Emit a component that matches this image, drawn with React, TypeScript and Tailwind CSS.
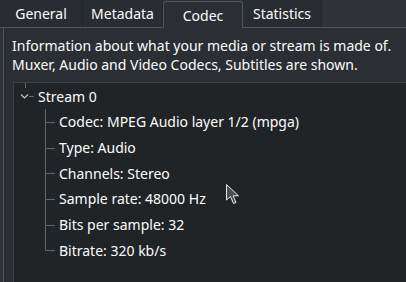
import React from 'react';

const tabs = [
  { label: 'General', w: 'w-[83px]' },
  { label: 'Metadata', w: 'w-[80px]' },
  { label: 'Codec', w: 'w-[80px]', active: true },
  { label: 'Statistics', w: 'w-[79px]' },
];

const fields = [
  'Codec: MPEG Audio layer 1/2 (mpga)',
  'Type: Audio',
  'Channels: Stereo',
  'Sample rate: 48000 Hz',
  'Bits per sample: 32',
  'Bitrate: 320 kb/s',
];

const Branch = ({ last }: { last: boolean }) => (
  <svg width="14" height="26" className="shrink-0">
    <line x1="0.5" y1="0" x2="0.5" y2={last ? 13 : 26} stroke="#62666b" />
    <line x1="0.5" y1="13.5" x2="10" y2="13.5" stroke="#62666b" />
  </svg>
);

const App: React.FC = () => {
  return (
    <div
      className="relative w-[406px] h-[282px] overflow-hidden bg-[#2e3236] text-[#fcfcfc] text-[14px] flex flex-col"
      style={{ fontFamily: '"Noto Sans", "DejaVu Sans", sans-serif' }}
    >
      {/* tab bar */}
      <div className="flex h-[28px] shrink-0">
        {tabs.map((t) =>
          t.active ? (
            <div
              key={t.label}
              className={`${t.w} mt-[1px] h-[27px] flex items-center justify-center border border-b-0 border-[#505459] rounded-t-[3px] bg-[#2b2f33]`}
            >
              {t.label}
            </div>
          ) : (
            <div
              key={t.label}
              className={`${t.w} h-[28px] flex items-center justify-center bg-[#292c30] border-b border-[#505459] border-r border-r-[#24272a]`}
            >
              {t.label}
            </div>
          )
        )}
        <div className="flex-1 h-[28px] border-b border-[#505459] bg-[#2f3337]" />
      </div>

      {/* panel */}
      <div className="flex-1 ml-[3px] border-l border-[#505459] bg-[#2b2f33] flex flex-col">
        <div className="px-[8px] pt-[8px] leading-[19px]">
          <p>Information about what your media or stream is made of.</p>
          <p>Muxer, Audio and Video Codecs, Subtitles are shown.</p>
        </div>

        <div className="flex-1 mt-[8px] ml-[9px] border-l border-t border-[#3d4146] bg-[#212427] flex flex-col">
          {/* root item */}
          <div className="flex items-center h-[26px]">
            <svg width="24" height="26" className="shrink-0">
              <line x1="11.5" y1="0" x2="11.5" y2="5" stroke="#62666b" />
              <polyline points="7,11.5 10.5,15 14,11.5" fill="none" stroke="#c8cacc" strokeWidth="1.1" />
              <line x1="15" y1="13.5" x2="20" y2="13.5" stroke="#62666b" />
            </svg>
            <span>Stream 0</span>
          </div>
          {fields.map((f, i) => (
            <div key={f} className="flex items-center h-[25.7px] pl-[31px]">
              <Branch last={i === fields.length - 1} />
              <span>{f}</span>
            </div>
          ))}
        </div>
      </div>

      {/* mouse pointer */}
      <svg width="16" height="22" className="absolute left-[226px] top-[184px]">
        <path
          d="M0.5 0.5 L0.5 16 L4.5 12.5 L7.5 19.5 L10 18.5 L7.2 11.8 L12.5 11.8 Z"
          fill="#4b4f54"
          stroke="#e8e8e8"
          strokeWidth="1"
          strokeLinejoin="round"
        />
      </svg>
    </div>
  );
};

export default App;
